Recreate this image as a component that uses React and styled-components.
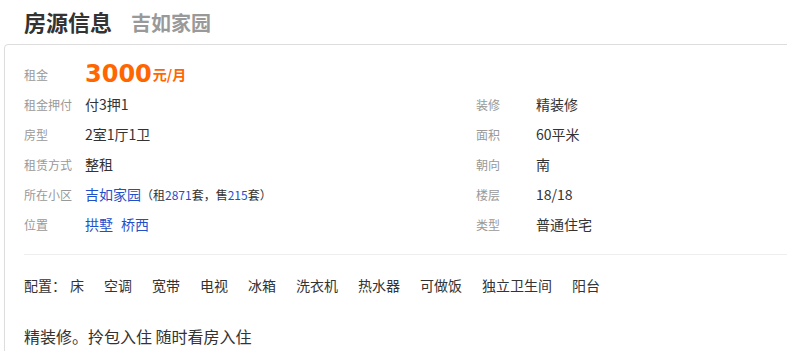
import React from 'react';
import styled, {createGlobalStyle} from 'styled-components';

const GlobalStyle = createGlobalStyle`
    html, body {
        margin: 0;
        padding: 0;
        background: #fff;
        overflow: hidden;
    }
    body {
        font-family: "Noto Sans CJK SC", "Liberation Sans", sans-serif;
        color: #333;
    }
`

const Page = styled.div`
    padding: 0 0 0 4px;
    width: 800px;
`

const TitleBar = styled.div`
    display: flex;
    align-items: baseline;
    height: 44px;
    padding-left: 20px;
    box-sizing: border-box;
    padding-top: 6px;
`

const Title = styled.h1`
    margin: 0;
    font-size: 22px;
    line-height: 30px;
    font-weight: bold;
    color: #333;
`

const SubTitle = styled.span`
    margin-left: 19px;
    font-size: 20px;
    font-weight: bold;
    color: #999;
`

const Card = styled.div`
    border: 1px solid #ddd;
    border-radius: 4px;
    padding: 14px 0 0 19px;
    height: 320px;
    box-sizing: border-box;
`

const InfoGrid = styled.div`
    display: grid;
    grid-template-columns: 452px 1fr;
`

const Item = styled.div`
    display: flex;
    align-items: center;
    height: 30px;
    grid-column: ${props => (props.wide ? '1 / span 2' : 'auto')};
`

const Label = styled.span`
    width: ${props => props.w || 61}px;
    font-size: 12px;
    color: #999;
    flex-shrink: 0;
`

const Value = styled.span`
    font-size: 14px;
    color: #333;
`

const Price = styled.span`
    font-family: "DejaVu Sans", sans-serif;
    font-size: 24px;
    font-weight: bold;
    color: #f60;
    line-height: 30px;
`

const Unit = styled.span`
    font-size: 14px;
    font-weight: bold;
    color: #f60;
    margin-left: 1px;
`

const Link = styled.a`
    color: #1f4fc9;
    text-decoration: none;
    font-size: 14px;
    margin-right: ${props => (props.spaced ? '8px' : '0')};
`

const Note = styled.span`
    font-size: 12px;
    color: #333;
`

const Num = styled.span`
    color: #1f4fc9;
`

const Divider = styled.div`
    border-top: 1px solid #eee;
    margin-top: 15px;
`

const Config = styled.div`
    display: flex;
    align-items: center;
    height: 30px;
    margin-top: 15px;
    font-size: 14px;
    color: #333;
`

const ConfigTitle = styled.span`
    width: 46px;
`

const ConfigItem = styled.span`
    margin-right: 20px;
`

const Desc = styled.p`
    margin: 21px 0 0;
    font-size: 16px;
    line-height: 30px;
    color: #333;
`

const facilities = ['床', '空调', '宽带', '电视', '冰箱', '洗衣机', '热水器', '可做饭', '独立卫生间', '阳台'];

const App = () => (
    <Page>
        <GlobalStyle/>
        <TitleBar>
            <Title>房源信息</Title>
            <SubTitle>吉如家园</SubTitle>
        </TitleBar>
        <Card>
            <InfoGrid>
                <Item wide>
                    <Label>租金</Label>
                    <Price>3000</Price>
                    <Unit>元/月</Unit>
                </Item>
                <Item><Label>租金押付</Label><Value>付3押1</Value></Item>
                <Item><Label w={60}>装修</Label><Value>精装修</Value></Item>
                <Item><Label>房型</Label><Value>2室1厅1卫</Value></Item>
                <Item><Label w={60}>面积</Label><Value>60平米</Value></Item>
                <Item><Label>租赁方式</Label><Value>整租</Value></Item>
                <Item><Label w={60}>朝向</Label><Value>南</Value></Item>
                <Item>
                    <Label>所在小区</Label>
                    <Link href="#">吉如家园</Link>
                    <Note>（租<Num>2871</Num>套，售<Num>215</Num>套）</Note>
                </Item>
                <Item><Label w={60}>楼层</Label><Value>18/18</Value></Item>
                <Item>
                    <Label>位置</Label>
                    <Link href="#" spaced>拱墅</Link>
                    <Link href="#">桥西</Link>
                </Item>
                <Item><Label w={60}>类型</Label><Value>普通住宅</Value></Item>
            </InfoGrid>
            <Divider/>
            <Config>
                <ConfigTitle>配置：</ConfigTitle>
                {facilities.map(f => <ConfigItem key={f}>{f}</ConfigItem>)}
            </Config>
            <Desc>精装修。拎包入住 随时看房入住</Desc>
        </Card>
    </Page>
);

export default App;
